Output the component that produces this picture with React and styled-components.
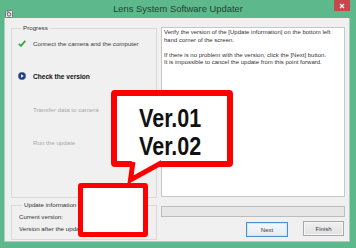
import React from "react";
import styled, { createGlobalStyle } from "styled-components";

const Global = createGlobalStyle`
  html, body { margin: 0; padding: 0; background: #5db98b; }
  body { width: 356px; height: 248px; overflow: hidden; font-family: "Liberation Sans", Arial, sans-serif; }
  * { box-sizing: border-box; }
`;

const Window = styled.div`
  position: relative;
  width: 356px;
  height: 248px;
  background: #5db98b;
  display: flex;
  flex-direction: column;
`;

const TitleBar = styled.div`
  height: 18px;
  display: grid;
  grid-template-columns: 40px 1fr 40px;
  align-items: start;
`;

const TitleIcon = styled.div`
  margin: 4px 0 0 5px;
  width: 8px;
  height: 8px;
`;

const Title = styled.div`
  text-align: center;
  font-size: 9.4px;
  line-height: 18px;
  color: #2f3a34;
`;

const Close = styled.div`
  justify-self: end;
  margin-right: 6px;
  width: 16px;
  height: 11px;
  background: #c9474b;
  display: flex;
  align-items: center;
  justify-content: center;
`;

const Content = styled.div`
  margin: 0 6px 0 4px;
  height: 224px;
  background: #f0f0f0;
  border: 1px solid #a9cfba;
  border-top: none;
  display: grid;
  grid-template-columns: 146px 184px;
  grid-template-rows: 174px 39px;
  column-gap: 4px;
  row-gap: 3px;
  padding: 6px 0 0 6px;
`;

const Group = styled.fieldset`
  margin: 0;
  padding: ${(p) => p.$pad};
  border: 1px solid #d9d9d9;
  min-width: 0;
  display: flex;
  flex-direction: column;
  gap: ${(p) => p.$gap};
`;

const Legend = styled.legend`
  margin-left: 3px;
  padding: 0 2px;
  font-size: 6.2px;
  line-height: 8px;
  color: #333;
`;

const Step = styled.div`
  height: 10px;
  display: flex;
  align-items: center;
  gap: 7px;
  font-size: ${(p) => (p.$state === "current" ? "6.6px" : "6.2px")};
  font-weight: ${(p) => (p.$state === "current" ? 700 : 400)};
  color: ${(p) =>
    p.$state === "done" ? "#3a3a3a" : p.$state === "current" ? "#111" : "#a8a8a8"};
  white-space: nowrap;
`;

const StepIcon = styled.div`
  width: 8px;
  height: 8px;
  flex: none;
  display: flex;
  align-items: center;
  justify-content: center;
`;

const InfoLine = styled.div`
  height: 10px;
  line-height: 10px;
  font-size: 6.2px;
  color: #333;
  white-space: nowrap;
  overflow: hidden;
`;

const TextBox = styled.div`
  margin-top: 3px;
  height: 170px;
  background: #fff;
  border: 1px solid #c6c6c6;
  padding: 1px 2px;
  font-size: 6px;
  line-height: 7.6px;
  color: #333;
`;

const Para = styled.p`
  margin: 0 0 7.6px 0;
`;

const RightBottom = styled.div`
  display: flex;
  flex-direction: column;
  padding-top: 5px;
`;

const ProgressBar = styled.div`
  height: 11px;
  background: #e6e6e6;
  border: 1px solid #bcbcbc;
`;

const Buttons = styled.div`
  margin-top: 4px;
  display: flex;
  justify-content: flex-end;
  align-items: flex-start;
  gap: 15px;
  padding-right: 1px;
`;

const Button = styled.div`
  width: ${(p) => p.$w}px;
  height: 15px;
  margin-top: ${(p) => (p.$focus ? "1px" : "0")};
  border: 1px solid ${(p) => (p.$focus ? "#4f8fc4" : "#a9a9a9")};
  background: ${(p) =>
    p.$focus ? "linear-gradient(#f4f8fb, #e4ecf3)" : "linear-gradient(#f0f0f0, #e2e2e2)"};
  box-shadow: inset 0 0 0 1px ${(p) => (p.$focus ? "#cfe4f5" : "#f6f6f6")};
  font-size: 6px;
  color: #333;
  display: flex;
  align-items: center;
  justify-content: center;
`;

const Callout = styled.div`
  position: absolute;
  left: 111px;
  top: 90px;
  width: 122px;
  height: 77px;
  border: 6px solid #ff0000;
  border-radius: 4px;
  background: #fff;
  padding: 8px 4px 0 0;
  display: flex;
  flex-direction: column;
  align-items: center;
`;

const CalloutLine = styled.span`
  display: inline-block;
  font-family: "Liberation Sans", Arial, sans-serif;
  font-weight: 700;
  font-size: 25px;
  line-height: 28px;
  color: #111;
  transform: scaleX(0.86);
`;

const Tail = styled.svg`
  position: absolute;
  left: 118px;
  top: 150px;
`;

const SmallBox = styled.div`
  position: absolute;
  left: 78px;
  top: 183px;
  width: 70px;
  height: 54px;
  border: 5px solid #ff0000;
  border-radius: 3px;
  background: #fff;
`;

const steps = [
  { label: "Connect the camera and the computer", state: "done" },
  { label: "Check the version", state: "current" },
  { label: "Transfer data to camera", state: "pending" },
  { label: "Run the update", state: "pending" },
];

function Icon({ state }) {
  if (state === "done")
    return (
      <svg width="8" height="7" viewBox="0 0 8 7">
        <path d="M0.8 3.8 L3 5.8 L7.3 0.9" fill="none" stroke="#35a43a" strokeWidth="1.8" />
      </svg>
    );
  if (state === "current")
    return (
      <svg width="8" height="8" viewBox="0 0 8 8">
        <circle cx="4" cy="4" r="3.7" fill="#22397a" />
        <circle cx="4" cy="4" r="3.7" fill="none" stroke="#5d74b0" strokeWidth="0.6" />
        <path d="M3 2.2 L5.8 4 L3 5.8 Z" fill="#fff" />
      </svg>
    );
  return null;
}

export default function App() {
  return (
    <>
      <Global />
      <Window>
        <TitleBar>
          <TitleIcon>
            <svg width="8" height="8" viewBox="0 0 8 8">
              <rect x="0.5" y="0.5" width="7" height="7" rx="1" fill="#e8e8e8" stroke="#7a7a7a" />
              <circle cx="4" cy="4.3" r="1.8" fill="none" stroke="#555" strokeWidth="0.9" />
              <rect x="1.5" y="1.3" width="2" height="1" fill="#666" />
            </svg>
          </TitleIcon>
          <Title>Lens System Software Updater</Title>
          <Close>
            <svg width="6" height="6" viewBox="0 0 6 6">
              <path d="M1 1 L5 5 M5 1 L1 5" stroke="#fff" strokeWidth="1.2" />
            </svg>
          </Close>
        </TitleBar>
        <Content>
          <Group $pad="6px 0 0 6px" $gap="23px">
            <Legend>Progress</Legend>
            {steps.map((s) => (
              <Step key={s.label} $state={s.state}>
                <StepIcon>
                  <Icon state={s.state} />
                </StepIcon>
                {s.label}
              </Step>
            ))}
          </Group>
          <TextBox>
            <Para>
              Verify the version of the [Update information] on the bottom left hand corner of the screen.
            </Para>
            <Para>
              If there is no problem with the version, click the [Next] button.
              <br />
              It is impossible to cancel the update from this point forward.
            </Para>
          </TextBox>
          <Group $pad="3px 0 0 7px" $gap="2px">
            <Legend>Update information</Legend>
            <InfoLine>Current version:</InfoLine>
            <InfoLine>Version after the update:</InfoLine>
          </Group>
          <RightBottom>
            <ProgressBar />
            <Buttons>
              <Button $w={42} $focus>Next</Button>
              <Button $w={41}>Finish</Button>
            </Buttons>
          </RightBottom>
        </Content>
        <Callout>
          <CalloutLine>Ver.01</CalloutLine>
          <CalloutLine>Ver.02</CalloutLine>
        </Callout>
        <Tail width="52" height="38" viewBox="0 0 52 38">
          <polygon points="14,9 47,9 12,31" fill="#fff" />
          <polyline points="15,12 12.5,30 44,12.5" fill="none" stroke="#ff0000" strokeWidth="5" strokeLinejoin="miter" />
        </Tail>
        <SmallBox />
      </Window>
    </>
  );
}
